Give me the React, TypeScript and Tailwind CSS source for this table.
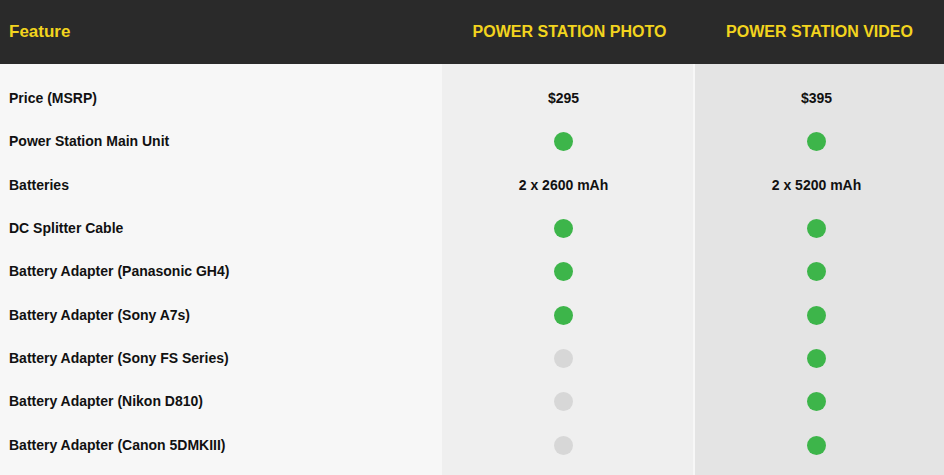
const rows: { name: string; photo: string | boolean; video: string | boolean }[] = [
    {name: 'Price (MSRP)', photo: '$295', video: '$395'},
    {name: 'Power Station Main Unit', photo: true, video: true},
    {name: 'Batteries', photo: '2 x 2600 mAh', video: '2 x 5200 mAh'},
    {name: 'DC Splitter Cable', photo: true, video: true},
    {name: 'Battery Adapter (Panasonic GH4)', photo: true, video: true},
    {name: 'Battery Adapter (Sony A7s)', photo: true, video: true},
    {name: 'Battery Adapter (Sony FS Series)', photo: false, video: true},
    {name: 'Battery Adapter (Nikon D810)', photo: false, video: true},
    {name: 'Battery Adapter (Canon 5DMKIII)', photo: false, video: true},
];

function Cell({value}: { value: string | boolean }) {
    if (typeof value === 'string') {
        return <span className="text-[14px] font-bold text-[#111]">{value}</span>;
    }
    return (
        <span className={value ? 'block w-[19px] h-[19px] rounded-full bg-[#3db54a]' : 'block w-[19px] h-[19px] rounded-full bg-[#d7d7d7]'}/>
    );
}

export default function App() {
    return (
        <div className="w-[944px] h-[475px] overflow-hidden bg-[#f7f7f7] font-['Liberation_Sans',Arial,sans-serif]">
            <div className="flex h-[64px] bg-[#2a2a2a] text-[#f2d41e] font-bold">
                <div className="w-[442px] flex items-center pl-[9px] text-[17px]">Feature</div>
                <div className="w-[251px] flex items-center justify-center text-[16px] pl-[4px]">POWER STATION PHOTO</div>
                <div className="w-[2px]"/>
                <div className="w-[249px] flex items-center justify-center text-[16px]">POWER STATION VIDEO</div>
            </div>
            <div className="flex h-[411px]">
                <div className="w-[442px] pt-[13px]">
                    {rows.map((r) => (
                        <div key={r.name} className="h-[43.3px] flex items-center pl-[9px] text-[14px] font-bold text-[#111]">
                            {r.name}
                        </div>
                    ))}
                </div>
                <div className="w-[251px] bg-[#efefef] pt-[13px]">
                    {rows.map((r) => (
                        <div key={r.name} className="h-[43.3px] flex items-center justify-center pr-[8px]">
                            <Cell value={r.photo}/>
                        </div>
                    ))}
                </div>
                <div className="w-[2px]"/>
                <div className="w-[249px] bg-[#e4e4e4] pt-[13px]">
                    {rows.map((r) => (
                        <div key={r.name} className="h-[43.3px] flex items-center justify-center pr-[6px]">
                            <Cell value={r.video}/>
                        </div>
                    ))}
                </div>
            </div>
        </div>
    );
}
